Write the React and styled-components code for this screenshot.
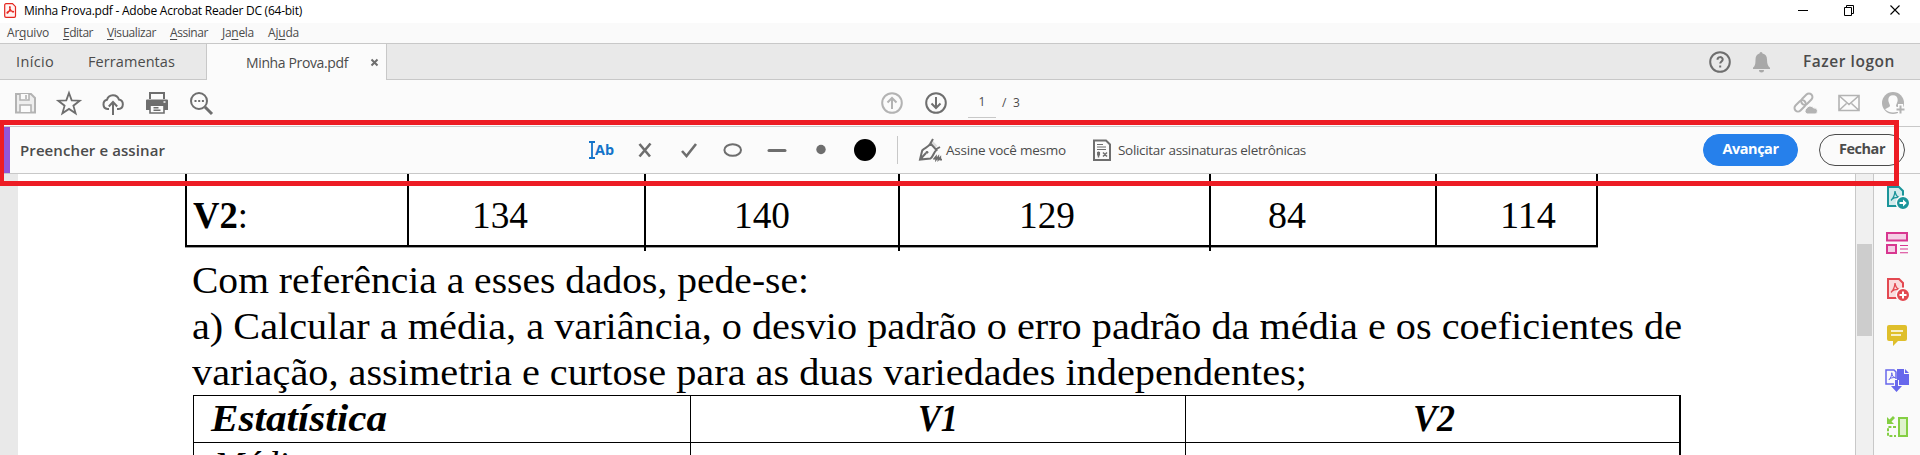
import React, { useLayoutEffect, useRef, useState } from "react";
import styled, { createGlobalStyle } from "styled-components";

const Global = createGlobalStyle`
  * { box-sizing: border-box; }
  body { margin: 0; overflow: hidden; background: #fff; font-family: "Open Sans", "Noto Sans", sans-serif; }
`;

/* ---------- text that keeps a fixed measure ---------- */
const Measure = styled.span`
  display: inline-block;
  flex: none;
  width: ${(p) => p.$w}px;
  white-space: pre;
`;
const Run = styled.span`
  display: inline-block;
  transform-origin: 0 50%;
`;

function Fit({ w, stretch, children }) {
  const ref = useRef(null);
  const [style, setStyle] = useState({});
  useLayoutEffect(() => {
    const natural = ref.current.getBoundingClientRect().width;
    const count = ref.current.textContent.length;
    setStyle(
      stretch
        ? { transform: `scaleX(${w / natural})` }
        : { letterSpacing: `${(w - natural) / count}px` }
    );
  }, [w, stretch]);
  return (
    <Measure $w={w}>
      <Run ref={ref} style={style}>{children}</Run>
    </Measure>
  );
}

/* ---------- window ---------- */
const Window = styled.div`
  position: relative;
  width: 1920px;
  height: 455px;
  display: flex;
  flex-direction: column;
  overflow: hidden;
`;
const TitleBar = styled.header`
  height: 23px;
  display: flex;
  align-items: center;
  padding: 0 19px 3px 4px;
  background: #fff;
  color: #000;
  font-size: 12px;
  line-height: 18px;
`;
const TitleText = styled.div`
  margin: 1px 0 0 8px;
`;
const WindowButtons = styled.div`
  margin-left: auto;
  display: flex;
  gap: 34px;
`;
const MenuBar = styled.nav`
  height: 20px;
  display: flex;
  gap: 14px;
  padding-left: 7px;
  background: #fafafa;
  color: #4b4b4b;
  font-size: 12px;
  line-height: 19px;
`;
const Key = styled.span`
  text-decoration: underline;
  text-underline-offset: 2px;
`;
const TabBar = styled.div`
  height: 37px;
  display: flex;
  background: #e9e9e9;
  border-top: 1px solid #c8c8c8;
  color: #4b4b4b;
  font-size: 14.5px;
  line-height: 35px;
`;
const TabStrip = styled.div`
  display: flex;
  width: ${(p) => p.$w || "auto"};
  flex: ${(p) => (p.$grow ? 1 : "none")};
  align-items: center;
  gap: ${(p) => p.$gap || 0}px;
  padding: 0 ${(p) => p.$right || 0}px 0 ${(p) => p.$left || 0}px;
  justify-content: ${(p) => (p.$grow ? "flex-end" : "flex-start")};
  border-bottom: 1px solid #c8c8c8;
`;
const ActiveTab = styled.div`
  width: 181px;
  display: flex;
  align-items: center;
  padding-left: 39px;
  gap: 22px;
  background: #fbfbfb;
  border: solid #c8c8c8;
  border-width: 0 1px;
  font-size: 14px;
`;
const Logon = styled.div`
  margin-left: 13px;
  font-weight: 600;
  font-size: 15.5px;
`;
const Toolbar = styled.div`
  height: 46px;
  display: flex;
  align-items: center;
  padding: 0 15px 0 13px;
  background: #fbfbfb;
`;
const IconGroup = styled.div`
  display: flex;
  align-items: center;
  gap: ${(p) => p.$gap || 20}px;
  margin-left: ${(p) => (p.$push ? "auto" : `${p.$ml || 0}px`)};
`;
const PageNumber = styled.div`
  width: 28px;
  height: 27px;
  margin-top: 2px;
  border-bottom: 1px solid #c8c8c8;
  text-align: center;
  font-size: 12px;
  line-height: 22px;
  color: #4b4b4b;
`;
const PageTotal = styled.div`
  margin-left: -14px;
  font-size: 12px;
  line-height: 22px;
  color: #4b4b4b;
`;
const FillBar = styled.div`
  height: 48px;
  flex: none;
  display: flex;
  align-items: center;
  padding-right: 15px;
  background: #fbfbfb;
  border: solid #c8c8c8;
  border-width: 1px 0;
`;
const Accent = styled.div`
  width: 6px;
  height: 46px;
  margin-left: 4px;
  background: #9256d9;
`;
const FillTitle = styled.div`
  width: 569px;
  margin-left: 10px;
  color: #4b4b4b;
  font-size: 15px;
  font-weight: 600;
  line-height: 24px;
`;
const Divider = styled.div`
  width: 1px;
  height: 28px;
  margin: 0 20px;
  background: #c8c8c8;
`;
const SignAction = styled.div`
  display: flex;
  align-items: center;
  gap: ${(p) => p.$gap}px;
  margin-right: ${(p) => p.$mr || 0}px;
  color: #4b4b4b;
  font-size: 13.5px;
  line-height: 22px;
`;
const Pill = styled.button`
  width: ${(p) => p.$w}px;
  height: 32px;
  padding: 0 0 2px;
  border-radius: 16px;
  border: 1px solid ${(p) => (p.$primary ? "#2680eb" : "#4b4b4b")};
  background: ${(p) => (p.$primary ? "#2680eb" : "#fbfbfb")};
  color: ${(p) => (p.$primary ? "#fff" : "#4b4b4b")};
  font: 700 14.5px/28px "Open Sans", sans-serif;
`;
const TypeTool = styled.div`
  width: 24px;
  display: flex;
  align-items: center;
  color: #1473c9;
  font-size: 14px;
  font-weight: 700;
  line-height: 20px;
`;

/* ---------- document ---------- */
const Workspace = styled.main`
  flex: 1;
  display: flex;
  min-height: 0;
`;
const Gutter = styled.div`
  width: 18px;
  background: #e9e9e9;
`;
const Page = styled.article`
  width: 1837px;
  height: 281px;
  overflow: hidden;
  background: #fff;
  color: #000;
  font-family: "Liberation Serif", serif;
  font-size: 38px;
  line-height: 46px;
`;
const DataRow = styled.div`
  width: 1413px;
  height: 73px;
  margin-left: 167px;
  display: flex;
  border-bottom: 2px solid #000;
  box-shadow: 0 1px #999;
`;
const DataCell = styled.div`
  flex: none;
  width: ${(p) => p.$w}px;
  height: ${(p) => (p.$long ? 77 : 73)}px;
  padding: 18px 0 0 ${(p) => p.$pad}px;
  border-left: 2px solid #000;
  &:last-child { border-right: 2px solid #000; }
`;
const Paragraph = styled.div`
  display: flex;
  flex-direction: column;
  margin: 10px 0 0 174px;
`;
const Stats = styled.div`
  width: 1488px;
  margin-left: 175px;
  display: grid;
  grid-template-columns: 497px 495px 496px;
  border-top: 1px solid #000;
  border-right: 2px solid #000;
`;
const StatCell = styled.div`
  height: 47px;
  padding-left: ${(p) => p.$pad || 0}px;
  border-left: 1px solid #000;
  border-bottom: 1px solid #000;
  font-weight: ${(p) => (p.$head ? 700 : 400)};
  font-style: italic;
  line-height: 45px;
`;
const ScrollTrack = styled.div`
  width: 19px;
  padding: 70px 1px 0;
  border: solid #c8c8c8;
  border-width: 0 1px;
  background: #f0f0f0;
`;
const ScrollThumb = styled.div`
  height: 92px;
  background: #cdcdcd;
`;
const ToolPane = styled.aside`
  flex: 1;
  display: flex;
  flex-direction: column;
  gap: 22px;
  padding: 11px 0 0 11px;
  background: #fafafa;
`;
const Highlight = styled.div`
  position: absolute;
  left: 0;
  top: 120px;
  width: 1899px;
  height: 66px;
  border: 5px solid #ed1c24;
  border-left-width: 4px;
`;

/* ---------- icons ---------- */
const Svg = styled.svg`
  display: block;
  flex: none;
  width: ${(p) => p.$w || 24}px;
  height: ${(p) => p.$h || 24}px;
  fill: none;
  stroke: ${(p) => p.$c || "#6e6e6e"};
  stroke-width: ${(p) => p.$s || 2};
  overflow: visible;
`;
const Icon = ({ w = 24, h = 24, c, s, children }) => (
  <Svg $w={w} $h={h} $c={c} $s={s} viewBox={`0 0 ${w} ${h}`}>{children}</Svg>
);
const AppIcon = () => (
  <Icon w={12} h={15} c="#e5261f" s={1.2}>
    <path d="M2 .7h6.500l3 3V13a1.300 1.300 0 0 1-1.300 1.300H2A1.300 1.300 0 0 1 .7 13V2A1.300 1.300 0 0 1 2 .7Z" fill="#fff4f3" />
    <path d="M6 3.600c-.8 0-.2 2 .6 3.300.7 1.200 2 2.300 2.800 2.100.8-.4-1-1.100-2.700-1-1.600.1-4 1-3.800 1.900.3.9 1.600-.6 2.400-2.400C6.100 6 6.500 3.700 6 3.600Z" />
  </Icon>
);
const Save = () => (
  <Icon c="#b3b3b3">
    <path d="M3 3h15l4 4v14.500H3Z" fill="#eee" />
    <path d="M7 3v6h9V3M13 4v4M7 21v-7h11v7" fill="#fbfbfb" strokeWidth="1.600" />
  </Icon>
);
const Star = () => (
  <Icon s={1.8}>
    <path d="M12 2l2.700 7.400 8 .3-6.300 5 2.200 7.600L12 17.900l-6.600 4.400 2.200-7.600-6.300-5 8-.3Z" />
  </Icon>
);
const Cloud = () => (
  <Icon>
    <path d="M8 18H6.500A4.700 4.700 0 0 1 6 8.800 6.200 6.200 0 0 1 17.900 8.500 4.800 4.800 0 0 1 17.500 18H16M12 24V11.500M7.800 15.500 12 11l4.200 4.500" />
  </Icon>
);
const Printer = () => (
  <Icon>
    <path d="M5 8V2h14v6" />
    <path d="M2 8.500h20a1 1 0 0 1 1 1V19h-4v-4H5v4H1V9.500a1 1 0 0 1 1-1Z" fill="#6e6e6e" stroke="none" />
    <path d="M5 14h14v8H5ZM8.500 16.800h5M8.500 19.300h7" strokeWidth="1.600" />
    <path d="M18.500 11h2" stroke="#fbfbfb" strokeWidth="1.500" />
  </Icon>
);
const Search = () => (
  <Icon>
    <circle cx="10" cy="10" r="8" />
    <path d="m16 16 7 7" strokeWidth="3" />
    <path d="M5.500 10h9.500" strokeDasharray="2 1.700" />
  </Icon>
);
const PageArrow = ({ c, down }) => (
  <Icon c={c}>
    <circle cx="12" cy="12" r="9.800" />
    <path d={down ? "M12 6v11M7.500 12.500 12 17l4.500-4.500" : "M12 18V7M7.500 11.500 12 7l4.500 4.500"} />
  </Icon>
);
const LinkCloud = () => (
  <Icon c="#b3b3b3">
    <g transform="rotate(-45 11 11)">
      <rect x="-1" y="7.500" width="13" height="7" rx="3.500" />
      <rect x="8.500" y="7.500" width="13" height="7" rx="3.500" />
    </g>
    <path d="M14 23a3 3 0 0 1-.6-5.400 4 4 0 0 1 7.200-.6 3 3 0 0 1 1.600 6Z" fill="#b3b3b3" stroke="#fbfbfb" strokeWidth="1" />
  </Icon>
);
const Mail = () => (
  <Icon c="#b3b3b3" s={1.6}>
    <path d="M2 4.500h20v15H2ZM3 5.500l9 8 9-8M3 18.500l6.500-6M21 18.500l-6.500-6" />
  </Icon>
);
const UserPlus = () => (
  <Icon c="#b3b3b3">
    <circle cx="12" cy="12" r="11" fill="#b3b3b3" stroke="none" />
    <path d="M12 4.200c3 0 4.700 2 4.700 4.800 0 2.600-1.700 4.400-1.700 5.800 0 1.600 3.500 2 4.800 3.700C17.500 20.500 15 21.500 12 21.500S6.500 20.500 4.200 18.500C5.500 16.800 9 16.400 9 14.800 9 13.400 7.300 11.600 7.300 9c0-2.800 1.700-4.800 4.700-4.800Z" fill="#fbfbfb" stroke="none" />
    <path d="M19.500 13v10M14.500 18.500h10" stroke="#fbfbfb" strokeWidth="5" />
    <path d="M19.500 14.500v8M15.500 18.500h8" />
  </Icon>
);
const Help = () => (
  <Icon>
    <circle cx="12" cy="12" r="9.800" />
    <path d="M9.500 9.800c0-3.600 5.200-3.400 5.200-.4 0 2-2.500 2.200-2.500 4.200M12.200 15.400v2.200" />
  </Icon>
);
const Bell = () => (
  <Icon c="none">
    <path d="M12 2a1.500 1.500 0 0 1 1.500 1.500C16.500 4 18 6.500 18 9.500c0 4.500 1 6.500 3 8.300V19H4v-1.200C6 16 6.500 14 6.500 9.500 6.500 6.500 8 4 10.500 3.500A1.500 1.500 0 0 1 12 2ZM10 20h5a2.500 2.500 0 0 1-5 0Z" fill="#a8a8a8" />
  </Icon>
);
const Pen = () => (
  <Icon>
    <path d="M14.500 2.500l5 5.500-3 2-4.500-5Z" fill="#ddd" stroke="none" />
    <path d="M2 21.500 4.200 12.500C6.500 9.800 10.500 9.300 12.500 5.500L18.500 12C15.500 14 15.500 18.500 12.500 20.500ZM2 21.500l6-6.500M12 6l3-5M17.500 11.500 22 9" />
    <circle cx="9" cy="14.300" r="1.400" fill="#6e6e6e" stroke="none" />
    <path d="m15.500 21.500 2.500-3v3.300l2.300-3v3l2-2.300v2.200h1.700" strokeWidth="1.700" />
  </Icon>
);
const SignDoc = () => (
  <Icon w={20}>
    <path d="M2 2.500h12l4 4V22H2Z" />
    <path d="M5 6.500h6M5 9h9M5 11.500h9" strokeWidth="1.200" />
    <path d="M6.500 13.500v6M5.800 14v3.500M7.300 14v3.500M11 14.500l4 4M15 14.500l-4 4" strokeWidth="1.500" />
  </Icon>
);
const PdfSheet = ({ c, tint, arrow }) => (
  <Icon c={c}>
    <path d="M3 2h11l4 4v15H3Z" fill={tint} />
    <path d="M10 6c-.3 4-1.500 7-4 9.500M10 6c.5 4 2 6 4.500 6.500-3.500-.4-6 .2-8 2" strokeWidth="1.300" />
    <circle cx="18" cy="18" r="6.700" fill={c} stroke="#fafafa" strokeWidth="1.400" />
    {arrow ? (
      <path d="M14.500 17h3.500v-2.500l3.700 3.500-3.700 3.500V19h-3.500Z" fill="#fff" stroke="none" />
    ) : (
      <path d="M14.500 18h7M18 14.500v7" stroke="#fff" />
    )}
  </Icon>
);
const Layout = () => (
  <Icon c="#d83790">
    <path d="M2 2h20v7.500H2ZM2 14h9v8H2Z" fill="#f5cfe6" />
    <path d="M15 14.500h8M15 18h8M15 21.800h8" strokeWidth="1.100" />
  </Icon>
);
const Comment = () => (
  <Icon c="none">
    <path d="M4 2h16a2 2 0 0 1 2 2v12a2 2 0 0 1-2 2h-7l-5 5v-5H4a2 2 0 0 1-2-2V4a2 2 0 0 1 2-2Z" fill="#dfbf2b" />
    <path d="M6 8h12M6 12h10" stroke="#fff" strokeWidth="1.600" />
  </Icon>
);
const Combine = () => (
  <Icon c="#6767ec">
    <path d="M9 15H1V1h8l2 2v7" strokeWidth="1.500" />
    <path d="M6.800 3.500c0 3-1 5.500-3 7.500M6.800 4c.3 3 1.500 4.500 3.500 4.500-2.500 0-4.500.3-6 1.700" strokeWidth="1" />
    <path d="M12 0h7v5h5v11H14v-5h-2ZM20 0l4 4h-4ZM10 11h3v6h4l-5.500 6L6 17h4Z" fill="#6767ec" stroke="none" />
  </Icon>
);
const Organize = () => (
  <Icon c="#84cf43">
    <path d="M14 3h8v18h-8Z" fill="#dff2cd" />
    <path d="M11 12H3v9h8" strokeDasharray="3 1.600" />
    <path d="M9 2 4.500 6.500" strokeWidth="2.800" />
    <path d="M2 2v7h7Z" fill="#84cf43" stroke="none" />
  </Icon>
);

export default function App() {
  return (
    <Window>
      <Global />
      <TitleBar>
        <AppIcon />
        <TitleText><Fit w={278}>Minha Prova.pdf - Adobe Acrobat Reader DC (64-bit)</Fit></TitleText>
        <WindowButtons>
          <Icon w={12} h={12} c="#000" s={1}><path d="M1 6.500h10" /></Icon>
          <Icon w={12} h={12} c="#000" s={1}><path d="M1.500 3.500h7v8h-7ZM3.500 3.500v-2h7v8h-2" /></Icon>
          <Icon w={12} h={12} c="#000" s={1.1}><path d="m1.500 1.500 9 9M10.500 1.500l-9 9" /></Icon>
        </WindowButtons>
      </TitleBar>
      <MenuBar>
        <Fit w={42}>Ar<Key>q</Key>uivo</Fit>
        <Fit w={30}><Key>E</Key>ditar</Fit>
        <Fit w={49}><Key>V</Key>isualizar</Fit>
        <Fit w={38}><Key>A</Key>ssinar</Fit>
        <Fit w={32}>Ja<Key>n</Key>ela</Fit>
        <Fit w={31}>Aj<Key>u</Key>da</Fit>
      </MenuBar>
      <TabBar>
        <TabStrip $w="206px" $left={16} $gap={34}>
          <Fit w={38}>Início</Fit>
          <Fit w={87}>Ferramentas</Fit>
        </TabStrip>
        <ActiveTab>
          <Fit w={102}>Minha Prova.pdf</Fit>
          <Icon w={9} h={9} s={2}><path d="m1.500 1.500 6 6M7.500 1.500l-6 6" /></Icon>
        </ActiveTab>
        <TabStrip $grow $right={25} $gap={17}>
          <Help />
          <Bell />
          <Logon><Fit w={92}>Fazer logon</Fit></Logon>
        </TabStrip>
      </TabBar>
      <Toolbar>
        <IconGroup><Save /><Star /><Cloud /><Printer /><Search /></IconGroup>
        <IconGroup $ml={667}>
          <PageArrow c="#b3b3b3" />
          <PageArrow down />
          <PageNumber>1</PageNumber>
          <PageTotal><Fit w={18}>/  3</Fit></PageTotal>
        </IconGroup>
        <IconGroup $push><LinkCloud /><Mail /><UserPlus /></IconGroup>
      </Toolbar>
      <FillBar>
        <Accent />
        <FillTitle><Fit w={145}>Preencher e assinar</Fit></FillTitle>
        <IconGroup>
          <TypeTool>
            <Icon w={6} h={20} c="#1473c9" s={1.8}><path d="M0 2h6M0 18h6M3 2v16" /></Icon>
            <Fit w={19} stretch>Ab</Fit>
          </TypeTool>
          <Icon><path d="M6.500 6 17 18.500M17.500 5.500 6.500 18.500" strokeWidth="2.600" /></Icon>
          <Icon><path d="m5 13 4.500 5L19 6" strokeWidth="2.600" /></Icon>
          <Icon><ellipse cx="11.700" cy="12" rx="8.300" ry="5.800" /></Icon>
          <Icon><path d="M4 12.500h16" strokeWidth="3" strokeLinecap="round" /></Icon>
          <Icon c="none"><circle cx="12" cy="11.500" r="4.700" fill="#6e6e6e" /></Icon>
          <Icon c="none"><circle cx="12" cy="12" r="11" fill="#000" /></Icon>
        </IconGroup>
        <Divider />
        <SignAction $gap={4} $mr={26}><Pen /><Fit w={120}>Assine você mesmo</Fit></SignAction>
        <SignAction $gap={6}><SignDoc /><Fit w={188}>Solicitar assinaturas eletrônicas</Fit></SignAction>
        <IconGroup $push $gap={21}>
          <Pill $w={95} $primary><Fit w={56}>Avançar</Fit></Pill>
          <Pill $w={86}><Fit w={46}>Fechar</Fit></Pill>
        </IconGroup>
      </FillBar>
      <Workspace>
        <Gutter />
        <Page>
          <DataRow>
            <DataCell $w={222} $pad={6}><Fit w={55} stretch><b>V2</b>:</Fit></DataCell>
            <DataCell $w={237} $pad={63}><Fit w={56} stretch>134</Fit></DataCell>
            <DataCell $w={254} $pad={88} $long><Fit w={56} stretch>140</Fit></DataCell>
            <DataCell $w={311} $pad={119} $long><Fit w={56} stretch>129</Fit></DataCell>
            <DataCell $w={226} $pad={57} $long><Fit w={38} stretch>84</Fit></DataCell>
            <DataCell $w={163} $pad={63}><Fit w={56} stretch>114</Fit></DataCell>
          </DataRow>
          <Paragraph>
            <Fit w={617} stretch>Com referência a esses dados, pede-se:</Fit>
            <Fit w={1490} stretch>a) Calcular a média, a variância, o desvio padrão o erro padrão da média e os coeficientes de</Fit>
            <Fit w={1115} stretch>variação, assimetria e curtose para as duas variedades independentes;</Fit>
          </Paragraph>
          <Stats>
            <StatCell $head $pad={17}><Fit w={176} stretch>Estatística</Fit></StatCell>
            <StatCell $head $pad={227}><Fit w={40} stretch>V1</Fit></StatCell>
            <StatCell $head $pad={227}><Fit w={42} stretch>V2</Fit></StatCell>
            <StatCell $pad={20}><Fit w={92} stretch>Média</Fit></StatCell>
            <StatCell />
            <StatCell />
          </Stats>
        </Page>
        <ScrollTrack><ScrollThumb /></ScrollTrack>
        <ToolPane>
          <PdfSheet c="#1b959a" tint="#d3ebec" arrow />
          <Layout />
          <PdfSheet c="#e34850" tint="#fadcdd" />
          <Comment />
          <Combine />
          <Organize />
        </ToolPane>
      </Workspace>
      <Highlight />
    </Window>
  );
}
